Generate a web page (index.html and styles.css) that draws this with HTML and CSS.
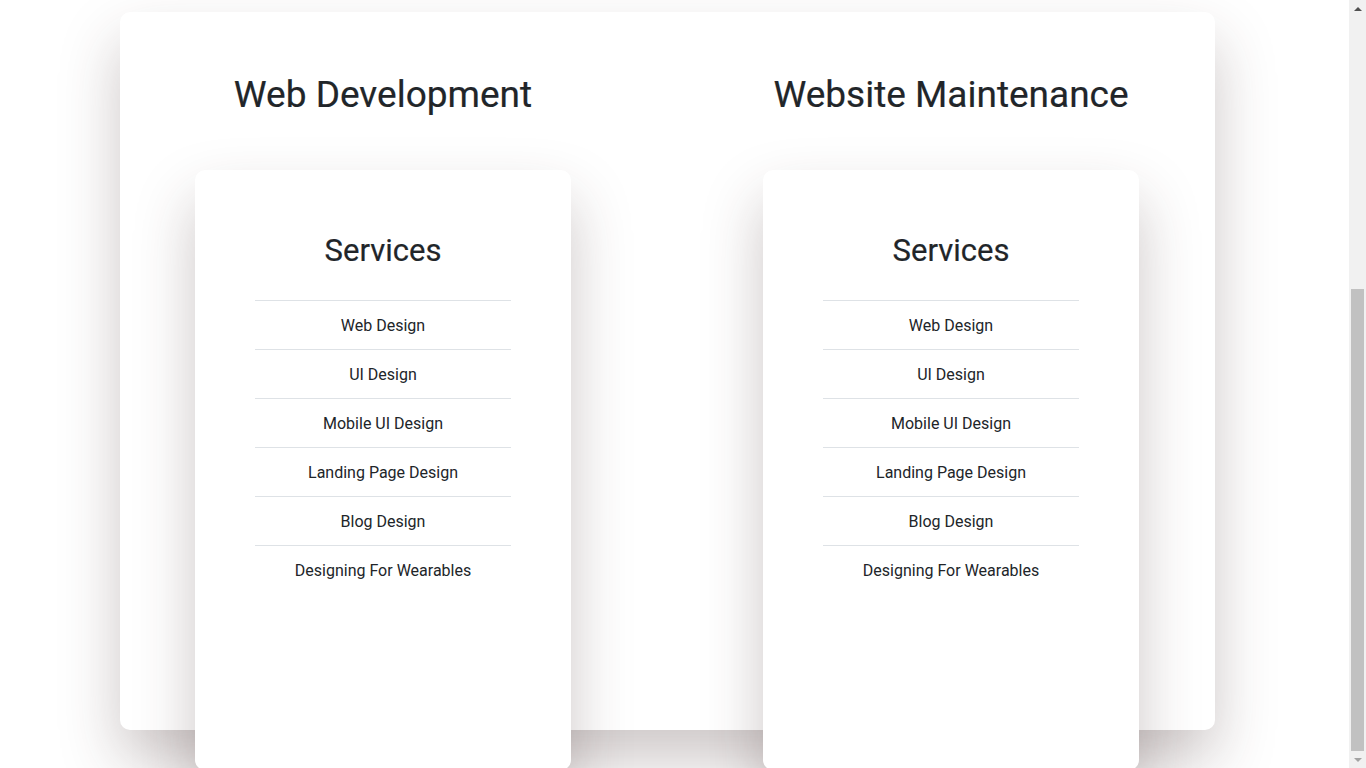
FILE: index.html
```html
<!DOCTYPE html>
<html lang="en">
<head>
<meta charset="utf-8">
<title>Services</title>
<link rel="stylesheet" href="styles.css">
</head>
<body>
<main class="page">
  <section class="panel">
    <div class="cols">
      <div class="col">
        <h1 class="title">Web Development</h1>
        <div class="card">
          <h2 class="card-title">Services</h2>
          <ul class="list">
            <li>Web Design</li>
            <li>UI Design</li>
            <li>Mobile UI Design</li>
            <li>Landing Page Design</li>
            <li>Blog Design</li>
            <li>Designing For Wearables</li>
          </ul>
        </div>
      </div>
      <div class="col">
        <h1 class="title">Website Maintenance</h1>
        <div class="card">
          <h2 class="card-title">Services</h2>
          <ul class="list">
            <li>Web Design</li>
            <li>UI Design</li>
            <li>Mobile UI Design</li>
            <li>Landing Page Design</li>
            <li>Blog Design</li>
            <li>Designing For Wearables</li>
          </ul>
        </div>
      </div>
    </div>
  </section>
</main>
<div class="scrollbar" aria-hidden="true">
  <div class="sb-btn"><span class="arrow-up"></span></div>
  <div class="sb-track"><div class="sb-thumb"></div></div>
  <div class="sb-btn"><span class="arrow-down"></span></div>
</div>
</body>
</html>
```

FILE: styles.css
```css
html, body {
  margin: 0;
  padding: 0;
  height: 100%;
  overflow: hidden;
  background: #fff;
}
body {
  font-family: Roboto, "Noto Sans", sans-serif;
  color: #212529;
  font-size: 16px;
  line-height: 1.5;
}
.page {
  padding-top: 12px;
  width: 1349px;
}
.panel {
  margin-left: 120px;
  width: 1095px;
  height: 718px;
  box-sizing: border-box;
  padding-top: 59px;
  background: #fff;
  border-radius: 10px;
  box-shadow: 0 30px 60px rgba(60, 40, 40, 0.26);
}
.cols {
  display: grid;
  grid-template-columns: 568px 568px;
  margin-left: -21px;
}
.col {
  display: flex;
  flex-direction: column;
  align-items: center;
}
.title {
  margin: 0;
  font-size: 37px;
  font-weight: 400;
  line-height: 48px;
  color: #212529;
  -webkit-text-stroke: 0.2px #212529;
}
.card {
  margin-top: 51px;
  width: 376px;
  height: 600px;
  box-sizing: border-box;
  padding: 62px 60px 0;
  background: #fff;
  border-radius: 10px;
  box-shadow: 0 30px 60px rgba(60, 40, 40, 0.26);
  text-align: center;
}
.card-title {
  margin: 0 0 30px;
  font-size: 31px;
  font-weight: 400;
  line-height: 38px;
  -webkit-text-stroke: 0.2px #212529;
}
.list {
  list-style: none;
  margin: 0;
  padding: 0;
}
.list li {
  border-top: 1px solid #dee2e6;
  padding: 13px 0 11px;
  line-height: 24px;
  font-size: 16px;
}

/* classic scrollbar, scrolled to the bottom */
.scrollbar {
  position: fixed;
  top: 0;
  right: 0;
  width: 17px;
  height: 768px;
  background: #f1f1f1;
  display: flex;
  flex-direction: column;
}
.sb-btn {
  height: 17px;
  display: flex;
  align-items: center;
  justify-content: center;
}
.sb-track {
  flex: 1;
  display: flex;
  flex-direction: column;
  justify-content: flex-end;
  padding: 0 2px;
}
.sb-thumb {
  height: 462px;
  background: #c1c1c1;
}
.arrow-up {
  width: 0;
  height: 0;
  border-left: 4px solid transparent;
  border-right: 4px solid transparent;
  border-bottom: 4px solid #505050;
}
.arrow-down {
  width: 0;
  height: 0;
  border-left: 4px solid transparent;
  border-right: 4px solid transparent;
  border-top: 4px solid #a3a3a3;
}
```
